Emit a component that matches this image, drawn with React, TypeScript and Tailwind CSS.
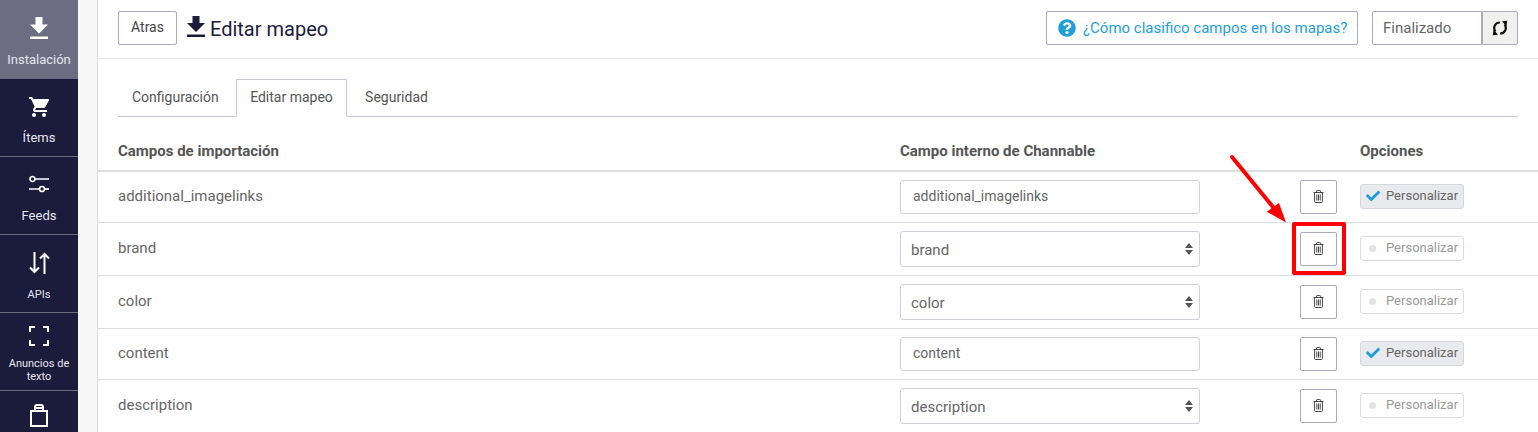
import React from "react";
import { FaCheck, FaQuestionCircle } from "react-icons/fa";

const Trash = () => (
  <svg width="11" height="13" viewBox="0 0 11 13" fill="none" stroke="#333" strokeWidth="0.9">
    <path d="M0.500 2.500h10M3.500 2.500V1.200q0-.7.7-.7h2.600q.7 0 .7.7v1.300M1.600 2.500v9q0 1 1 1h5.800q1 0 1-1v-9M3.800 4.500v6M5.500 4.500v6M7.200 4.500v6" />
  </svg>
);

const Nav = ({ icon, label, active, h, iconH, labelMt, small, last }: { icon: React.ReactNode; label: string; active?: boolean; h: string; iconH: string; labelMt: string; small?: boolean; last?: boolean }) => (
  <div className={`${h} shrink-0 flex flex-col items-center border-b ${last ? "border-transparent" : "border-[#6b6b80]"} ${active ? "bg-[#6c6c82]" : ""}`}>
    <div className={`${iconH} w-full flex items-end justify-center pb-1`}>{icon}</div>
    <div className={`text-center text-[#e6e6ec] ${labelMt} ${small ? "text-[11px] leading-[13px] px-1" : "text-[13px] leading-[16px]"}`}>{label}</div>
  </div>
);

type Row = { name: string; select: boolean; on: boolean; h: string };
const rows: Row[] = [
  { name: "additional_imagelinks", select: false, on: true, h: "h-[51px]" },
  { name: "brand", select: true, on: false, h: "h-[53px]" },
  { name: "color", select: true, on: false, h: "h-[53px]" },
  { name: "content", select: false, on: true, h: "h-[51px]" },
  { name: "description", select: true, on: false, h: "h-[53px]" },
];

const TableRow = ({ r }: { r: Row }) => (
  <div className={`${r.h} shrink-0 flex items-center border-b border-[#dddddd] pl-5 text-[#666] relative`}>
    <div className="w-[782px] text-[15px] -mt-[1px]">{r.name}</div>
    {r.select ? (
      <div className="w-[300px] h-[36px] border border-[#d0d0d8] rounded-[3px] flex items-center justify-between pl-[10px] pr-[5px] text-[15px] -mt-[1px]">
        <span className="pt-[4px]">{r.name}</span>
        <svg width="10" height="14" viewBox="0 0 10 14" fill="#555"><path d="M5 1l4 5H1zM5 13L1 8h8z" /></svg>
      </div>
    ) : (
      <div className="w-[300px] h-[34px] border border-[#d0d0d8] rounded-[3px] flex items-center pl-[12px] text-[14px] -mt-[1px]">{r.name}</div>
    )}
    <div className="ml-[100px] w-[37px] h-[34px] border border-[#a9a9b8] rounded-[2px] flex items-center justify-center bg-white -mt-[1px]"><Trash /></div>
    <div className={`ml-[23px] w-[104px] h-[25px] rounded-[3px] border flex items-center pl-[5px] text-[13px] -mt-[2px] ${r.on ? "bg-[#e8eaed] border-[#d5d7dc] text-[#666]" : "bg-white border-[#dcdcdc] text-[#999]"}`}>
      <span className="w-[20px] flex justify-start">
        {r.on ? <FaCheck className="text-[#1e9fdc] text-[14px]" /> : <span className="ml-[3px] w-[7px] h-[7px] rounded-full bg-[#e2e2e2]" />}
      </span>
      Personalizar
    </div>
  </div>
);

export default function App() {
  return (
    <div className="h-[432px] w-[1538px] overflow-hidden flex bg-white font-['Roboto',sans-serif] relative">
      <aside className="w-[78px] shrink-0 bg-[#1b1b3c] flex flex-col overflow-hidden">
        <Nav active h="h-[79px]" iconH="h-[43px]" labelMt="mt-[9px]" label="Instalación" icon={
          <svg width="18" height="22" viewBox="0 0 18 22" fill="#fff"><path d="M5.500 0h7v7.500H18L9 16.500 0 7.500h5.500zM0 19.500h18V22H0z" /></svg>
        } />
        <Nav h="h-[78px]" iconH="h-[42px]" labelMt="mt-[9px]" label="Ítems" icon={
          <svg width="20" height="20" viewBox="2 2 20 20" fill="#fff"><path d="M7 18a2 2 0 100 4 2 2 0 000-4zM2 2v2h2l3.600 7.600-1.350 2.450A2 2 0 008 17h12v-2H8.400a.25.25 0 01-.25-.25l.03-.12L9.100 13h7.450c.75 0 1.410-.41 1.750-1.030l3.580-6.490A1 1 0 0021 4H6.200l-.94-2zM17 18a2 2 0 100 4 2 2 0 000-4z" /></svg>
        } />
        <Nav h="h-[78px]" iconH="h-[42px]" labelMt="mt-[9px]" label="Feeds" icon={
          <svg width="20" height="20" viewBox="0 0 20 20" fill="none" stroke="#fff" strokeWidth="1.700"><circle cx="3.500" cy="4" r="2.500" /><path d="M6 4h14M0 14h10" /><circle cx="13" cy="14" r="2.500" /><path d="M15.500 14H20" /></svg>
        } />
        <Nav h="h-[78px]" iconH="h-[43px]" labelMt="mt-[10px]" small label="APIs" icon={
          <svg width="21" height="22" viewBox="0 0 21 22" fill="none" stroke="#fff" strokeWidth="2"><path d="M5.500 0v20M1 15.500l4.500 4.500 4.500-4.500M15.500 22V2M11 6.500L15.500 2 20 6.500" /></svg>
        } />
        <Nav h="h-[78px]" iconH="h-[37px]" labelMt="mt-[7px]" small label="Anuncios de texto" icon={
          <svg width="20" height="20" viewBox="0 0 20 20" fill="none" stroke="#fff" strokeWidth="2"><path d="M1 6V1h5M14 1h5v5M19 14v5h-5M6 19H1v-5" /></svg>
        } />
        <Nav h="h-[78px]" iconH="h-[40px]" labelMt="mt-[8px]" last label="" icon={
          <svg width="18" height="23" viewBox="0 0 18 23" fill="none" stroke="#fff" strokeWidth="2"><path d="M1 7h16v15H1zM5 7V3q0-2 2-2h4q2 0 2 2v4M5 4h8" /></svg>
        } />
      </aside>
      <div className="w-[19px] shrink-0 bg-[#f7f7f7]" />
      <main className="flex-1 min-w-0 border-l border-[#dddddd] flex flex-col">
        <header className="h-[59px] shrink-0 border-b border-[#e5e5e5] flex items-start pt-[11px] pl-5 pr-5 text-[#555]">
          <div className="w-[59px] h-[34px] border border-[#a9a9b8] rounded-[2px] flex items-center justify-center text-[14px] text-[#444] pb-[2px]">Atras</div>
          <svg className="ml-[10px] mt-[5px]" width="18" height="21" viewBox="0 0 18 21" fill="#1b1b3c"><path d="M5.500 0h7v7H18l-9 9-9-9h5.500zM0 18.500h18V21H0z" /></svg>
          <div className="ml-[5px] mt-[3px] text-[20px] leading-[30px] text-[#1b1b3c]">Editar mapeo</div>
          <div className="ml-auto w-[312px] h-[34px] border border-[#a9a9b8] rounded-[2px] flex items-center pl-[11px] text-[#1e9fdc] text-[15px] gap-[7px]">
            <FaQuestionCircle className="text-[18px] shrink-0" />
            <span className="whitespace-nowrap pt-[1px]">¿Cómo clasifico campos en los mapas?</span>
          </div>
          <div className="ml-[14px] w-[110px] h-[34px] border border-[#a9a9b8] rounded-l-[2px] flex items-center pl-[10px] pt-[1px] text-[15px] text-[#666]">Finalizado</div>
          <div className="w-[36px] h-[34px] border border-[#a9a9b8] rounded-r-[2px] bg-[#f0f0ef] flex items-center justify-center">
            <svg width="16" height="16" viewBox="0 0 16 16" fill="none" stroke="#111" strokeWidth="2.200"><path d="M8 2.500A5.500 5.500 0 0 0 3.500 11.500M8 13.500A5.500 5.500 0 0 0 12.500 4.500" /><path d="M.8 15.200l5.200-.4-4.500-5.300zM15.200.8l-5.200.4 4.500 5.300z" fill="#111" stroke="none" /></svg>
          </div>
        </header>
        <div className="h-[58px] shrink-0 pt-5 px-5">
          <div className="h-[38px] flex border-b border-[#c8c8d0] text-[14px] text-[#555]">
            <div className="w-[118px] flex items-center justify-start pl-[14px] pb-[1px]">Configuración</div>
            <div className="w-[111px] h-[38px] border border-[#c8c8d0] border-b-white bg-white flex items-center justify-center pb-[1px]">Editar mapeo</div>
            <div className="w-[98px] flex items-center justify-center pb-[1px] pl-[1px]">Seguridad</div>
          </div>
        </div>
        <div className="h-[55px] shrink-0 border-b-2 border-[#dddddd] flex items-center pl-5 pt-[16px] font-bold text-[15px] text-[#555]">
          <div className="w-[782px]">Campos de importación</div>
          <div className="w-[460px]">Campo interno de Channable</div>
          <div>Opciones</div>
        </div>
        {rows.map((r) => <TableRow key={r.name} r={r} />)}
      </main>
      <div className="absolute left-[1292px] top-[222px] w-[54px] h-[53px] border-[4px] border-[#ff0000] rounded-[2px]" />
      <svg className="absolute left-[1225px] top-[150px]" width="70" height="76" viewBox="0 0 70 76" fill="#ff0000">
        <path d="M7 7L48 57" stroke="#ff0000" strokeWidth="4" strokeLinecap="round" />
        <path d="M61 72.500L41.700 61.700 54 53z" />
      </svg>
    </div>
  );
}
